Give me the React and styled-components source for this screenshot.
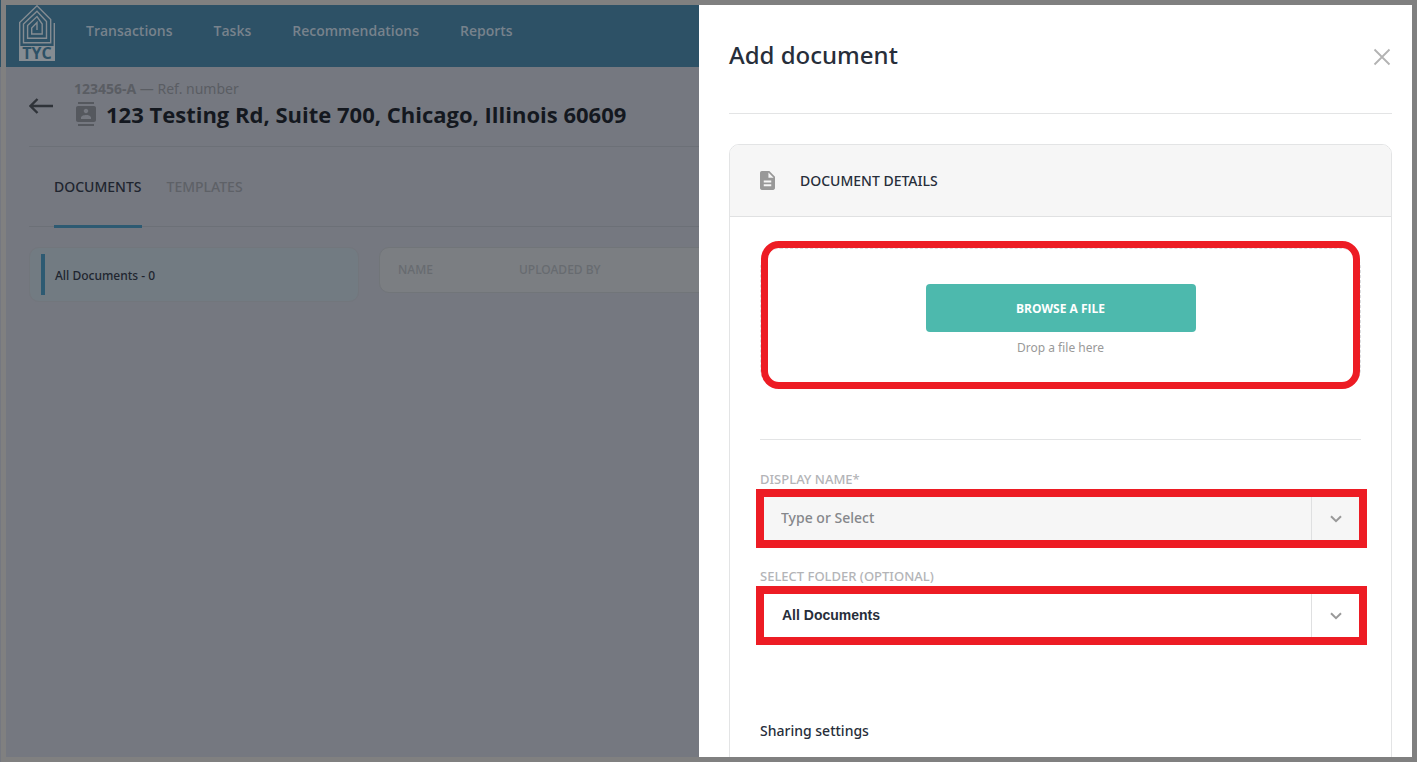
import styled, { createGlobalStyle } from "styled-components"
import { MdContacts } from "react-icons/md"

const GlobalStyle = createGlobalStyle`
    * {
        box-sizing: border-box;
    }
    body {
        margin: 0;
        font-family: "Noto Sans", "Open Sans", sans-serif;
        font-size: 14px;
        line-height: 20px;
        color: #272e3a;
    }
    button, input, select {
        font: inherit;
        color: inherit;
    }
`;

const Window = styled.div`
    height: 100vh;
    padding-left: 1px;
    background: linear-gradient(#2d5166 67px, #757880 67px);
`;

const Frame = styled.div`
    position: relative;
    height: 100%;
    overflow: hidden;
    border: 5px solid #808080;
    background-color: #757880;
`;

const Header = styled.header`
    display: flex;
    height: 62px;
    padding-left: 13px;
    background-color: #2d5166;
`;

const Nav = styled.nav`
    display: flex;
    gap: 41px;
    padding: 16px 0px 0px 31px;
`;

const NavLink = styled.a`
    font-family: "Open Sans", sans-serif;
    font-weight: 600;
    color: #77828c;
    text-decoration: none;
`;

const Content = styled.main`
    padding: 0px 23px;
`;

const Heading = styled.div`
    display: flex;
    align-items: center;
    gap: 20px;
    padding: 12px 0px 17px;
    border-bottom: 1px solid #6c7077;
`;

const BackButton = styled.button`
    display: flex;
    padding: 3px 0px 0px;
    border: none;
    background: none;
    color: #2f3339;
`;

const Reference = styled.div`
    color: #5a5d63;
`;

const Address = styled.h1`
    display: flex;
    align-items: center;
    gap: 8px;
    margin: 0;
    font-family: "Open Sans", sans-serif;
    font-size: 22px;
    font-weight: 700;
    line-height: 30px;
    color: #14181f;
    white-space: nowrap;

    svg {
        color: #55585e;
    }
`;

const Tabs = styled.div`
    display: flex;
    gap: 25px;
    padding-left: 25px;
    border-bottom: 1px solid #6c7077;
`;

const Tab = styled.button`
    margin-bottom: -2px;
    padding: 30px 0px 28px;
    border: none;
    border-bottom: 3px solid ${props => props.$active ? "#2d5a72" : "transparent"};
    background: none;
    font-weight: 500;
    color: ${props => props.$active ? "#20252f" : "#5e6167"};
`;

const Columns = styled.div`
    display: flex;
    align-items: flex-start;
    gap: 20px;
    padding-top: 20px;
`;

const Folders = styled.div`
    flex: 0 0 330px;
    padding: 6px 11px;
    border: 1px solid #72767c;
    border-radius: 10px;
    background-color: #727b82;
`;

const Folder = styled.a`
    display: block;
    padding: 12px 10px 9px;
    border-left: 4px solid #2d5a72;
    font-size: 12px;
    font-weight: 500;
    color: #20252f;
    text-decoration: none;
`;

const TableCard = styled.div`
    flex: 1;
    padding: 0px 18px;
    border: 1px solid #717579;
    border-radius: 10px;
    background-color: #7b7e82;
`;

const Table = styled.table`
    width: 100%;
    border-collapse: collapse;
    table-layout: fixed;
`;

const Th = styled.th`
    width: ${props => props.$width};
    padding: 12px 0px;
    font-size: 12px;
    font-weight: 500;
    text-align: left;
    color: #676b70;
`;

const Drawer = styled.aside`
    position: absolute;
    top: 0;
    right: 0;
    bottom: 0;
    width: calc(50% + 10px);
    padding: 0px 20px 0px 30px;
    overflow: hidden;
    background-color: white;
`;

const DrawerHeader = styled.div`
    display: flex;
    align-items: flex-start;
    justify-content: space-between;
    padding: 34px 0px 38px;
    border-bottom: 1px solid #e3e4e5;
`;

const DrawerTitle = styled.h2`
    margin: 0;
    font-size: 24px;
    font-weight: 500;
    line-height: 32px;
`;

const CloseButton = styled.button`
    display: flex;
    padding: 8px 0px;
    border: none;
    background: none;
    color: #b3b3b3;
`;

const Card = styled.section`
    margin-top: 30px;
    border: 1px solid #e3e4e5;
    border-radius: 10px;
    overflow: hidden;
`;

const CardHeader = styled.div`
    display: flex;
    align-items: center;
    gap: 25px;
    height: 72px;
    padding: 0px 30px;
    border-bottom: 1px solid #e0e1e2;
    background-color: #f6f6f6;
    color: #999999;
`;

const CardTitle = styled.h3`
    margin: 0;
    font-size: 14px;
    font-weight: 500;
    color: #272e3a;
`;

const CardBody = styled.div`
    padding: 31px 30px;
`;

const DropZone = styled.div`
    position: relative;
    display: flex;
    flex-direction: column;
    align-items: center;
    gap: 8px;
    padding: 35px 0px 32px;
    border: 1px dashed #dcdde0;
    border-radius: 20px;

    &::after {
        content: "";
        position: absolute;
        inset: -8px 0px -1px;
        border: 7px solid #ed1c24;
        border-radius: 18px;
        pointer-events: none;
    }
`;

const BrowseButton = styled.button`
    width: 270px;
    height: 48px;
    padding: 2px 0px 0px;
    border: none;
    border-radius: 4px;
    background-color: #4db9ad;
    font-family: "Open Sans", sans-serif;
    font-size: 12px;
    font-weight: 700;
    color: white;
`;

const Hint = styled.div`
    font-size: 12px;
    line-height: 16px;
    color: #999999;
`;

const Fields = styled.div`
    display: flex;
    flex-direction: column;
    gap: 18px;
    margin-top: 50px;
    padding-top: 29px;
    border-top: 1px solid #e3e4e5;
`;

const Label = styled.label`
    display: block;
    font-size: 13px;
    font-weight: 500;
    color: #b3b4b7;
`;

const Control = styled.div`
    display: flex;
    height: 59px;
    margin: 0px -6px 0px -4px;
    border: 8px solid #ed1c24;
    background-color: ${props => props.$filled ? "#f6f6f6" : "white"};
`;

const TextInput = styled.input`
    flex: 1;
    min-width: 0;
    padding: 0px 17px 2px;
    border: none;
    outline: none;
    background: none;
    font-weight: 500;

    &::placeholder {
        color: #85878b;
        opacity: 1;
    }
`;

const Select = styled.select`
    flex: 1;
    min-width: 0;
    padding: 0px 18px 2px;
    border: none;
    outline: none;
    appearance: none;
    background: none;
    font-family: "Liberation Sans", Arial, sans-serif;
    font-weight: 700;
`;

const Arrow = styled.span`
    display: flex;
    align-items: center;
    justify-content: center;
    width: 48px;
    border-left: 1px solid #dfe0e1;
    color: #999999;
`;

const SharingTitle = styled.h3`
    margin: 76px 0px 30px;
    font-size: 14px;
    font-weight: 500;
`;

const LogoImage = styled.svg`
    flex: none;
    overflow: visible;
`;

const Logo = () => (
    <LogoImage width="36" height="56" viewBox="0 0 36 56" fill="none" role="img" aria-label="TYC">
        <path
            d="M.7 42V17.5L18 .8 31.7 14.5V37.7H4.5V19L18 6.3 27.5 16.5V33.3H8.6V20.5L18 11.6 23.2 19V29H12.7V23L18 17.5V25"
            stroke="#858c92"
            strokeWidth="1.4"
        />
        <path d="M35.3 18V56" stroke="#858c92" strokeWidth="1.4" />
        <path d="M0 41H36V56H0Z" fill="#858c92" />
        <text x="18" y="54" fill="#2d5166" fontFamily="Open Sans, sans-serif" fontSize="16" fontWeight="700" textAnchor="middle">TYC</text>
    </LogoImage>
)

const BackIcon = () => (
    <svg width="25" height="20" viewBox="0 0 25 20" fill="none" stroke="currentColor" strokeWidth="2.4">
        <path d="M24 10H2M8.500 3L1.500 10 8.500 17" />
    </svg>
)

const CloseIcon = () => (
    <svg width="20" height="20" viewBox="0 0 20 20" fill="none" stroke="currentColor" strokeWidth="1.8">
        <path d="M2.5 2.5L17.5 17.5M17.5 2.5L2.5 17.5" />
    </svg>
)

const DocumentIcon = () => (
    <svg width="15" height="19" viewBox="4 2 16 20" preserveAspectRatio="none" fill="currentColor">
        <path d="M14 2H6c-1.1 0-1.99.9-1.99 2L4 20c0 1.1.89 2 1.99 2H18c1.1 0 2-.9 2-2V8l-6-6zm2 16H8v-2h8v2zm0-4H8v-2h8v2zm-3-5V3.500L18.500 9H13z" />
    </svg>
)

const ChevronIcon = () => (
    <svg width="12" height="8" viewBox="0 0 12 8" fill="none" stroke="currentColor" strokeWidth="2">
        <path d="M1 1.200L6 6.200 11 1.200" />
    </svg>
)

const App = () => {
    return (
        <Window>
            <GlobalStyle />
            <Frame>
                <Header>
                    <Logo />
                    <Nav>
                        <NavLink href="#transactions">Transactions</NavLink>
                        <NavLink href="#tasks">Tasks</NavLink>
                        <NavLink href="#recommendations">Recommendations</NavLink>
                        <NavLink href="#reports">Reports</NavLink>
                    </Nav>
                </Header>
                <Content>
                    <Heading>
                        <BackButton aria-label="Back"><BackIcon /></BackButton>
                        <div>
                            <Reference><b>123456-A</b> — Ref. number</Reference>
                            <Address><MdContacts size={24} /> 123 Testing Rd, Suite 700, Chicago, Illinois 60609</Address>
                        </div>
                    </Heading>
                    <Tabs>
                        <Tab $active>DOCUMENTS</Tab>
                        <Tab>TEMPLATES</Tab>
                    </Tabs>
                    <Columns>
                        <Folders>
                            <Folder href="#all">All Documents - 0</Folder>
                        </Folders>
                        <TableCard>
                            <Table>
                                <thead>
                                    <tr>
                                        <Th $width="121px">NAME</Th>
                                        <Th>UPLOADED BY</Th>
                                    </tr>
                                </thead>
                            </Table>
                        </TableCard>
                    </Columns>
                </Content>
                <Drawer>
                    <DrawerHeader>
                        <DrawerTitle>Add document</DrawerTitle>
                        <CloseButton aria-label="Close"><CloseIcon /></CloseButton>
                    </DrawerHeader>
                    <Card>
                        <CardHeader>
                            <DocumentIcon />
                            <CardTitle>DOCUMENT DETAILS</CardTitle>
                        </CardHeader>
                        <CardBody>
                            <DropZone>
                                <BrowseButton>BROWSE A FILE</BrowseButton>
                                <Hint>Drop a file here</Hint>
                            </DropZone>
                            <Fields>
                                <div>
                                    <Label htmlFor="name">DISPLAY NAME*</Label>
                                    <Control $filled>
                                        <TextInput id="name" placeholder="Type or Select" />
                                        <Arrow><ChevronIcon /></Arrow>
                                    </Control>
                                </div>
                                <div>
                                    <Label htmlFor="folder">SELECT FOLDER (OPTIONAL)</Label>
                                    <Control>
                                        <Select id="folder">
                                            <option>All Documents</option>
                                        </Select>
                                        <Arrow><ChevronIcon /></Arrow>
                                    </Control>
                                </div>
                            </Fields>
                            <SharingTitle>Sharing settings</SharingTitle>
                        </CardBody>
                    </Card>
                </Drawer>
            </Frame>
        </Window>
    )
}

export default App;
